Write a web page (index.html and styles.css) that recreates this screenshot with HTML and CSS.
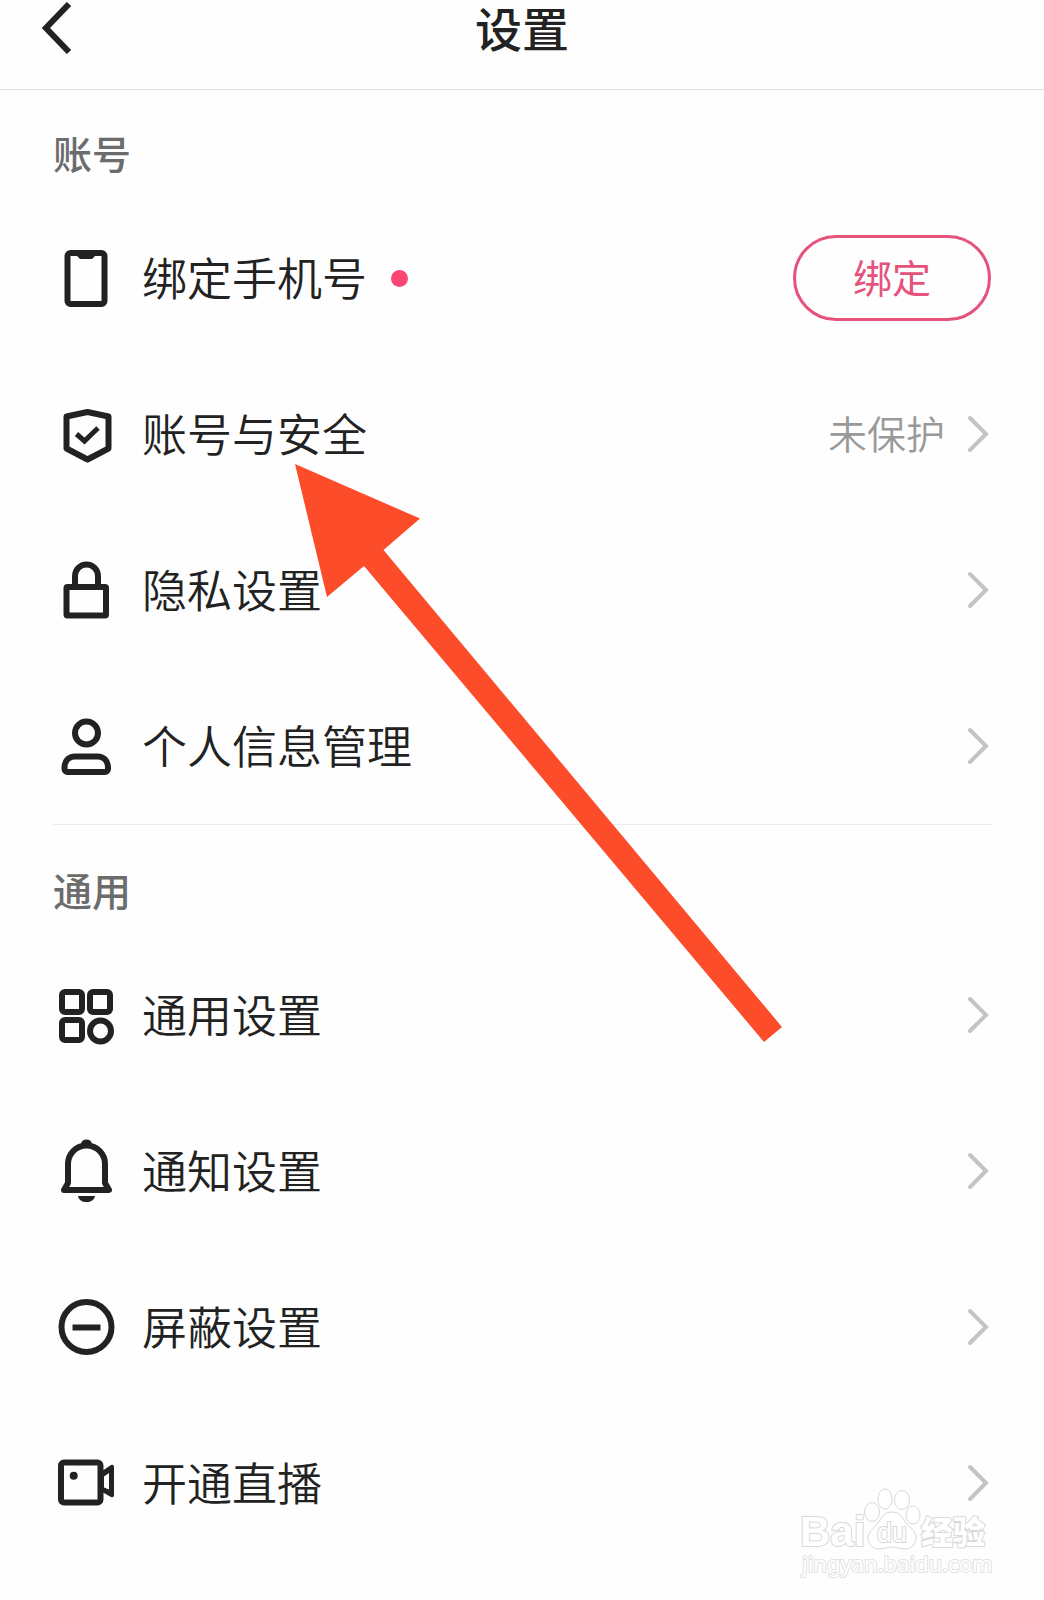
FILE: index.html
```
<!DOCTYPE html>
<html lang="zh-CN">
<head>
  <meta charset="UTF-8">
  <title>设置</title>
  <meta name="viewport" content="width=device-width, initial-scale=1.0">
  <link rel="stylesheet" href="styles.css">
</head>
<body>
  <header class="header">
    <button class="back" type="button" aria-label="返回">
      <svg width="30" height="52" viewBox="0 0 30 52"><path d="M27 2L4 26l23 24"/></svg>
    </button>
    <h1>设置</h1>
  </header>

  <main class="content">
    <section class="section">
      <h2>账号</h2>
      <ul class="list">
        <li class="row">
          <svg class="icon" viewBox="0 0 66 60"><rect x="14.5" y="5" width="37" height="51" rx="3"/><path class="solid" d="M24 5h18v3l-3 3H27l-3-3z"/></svg>
          <span class="label">绑定手机号</span>
          <span class="dot"></span>
          <button class="bind" type="button">绑定</button>
        </li>
        <li>
          <a class="row" href="#">
            <svg class="icon" viewBox="0 0 66 60"><path d="M34.5 8l21 4.500V44.500l-21 11-21-11V12.500z"/><path class="check" d="M23.500 30l8 7 13.500-13"/></svg>
            <span class="label">账号与安全</span>
            <span class="status">未保护</span>
            <svg class="arrow" viewBox="0 0 24 40"><path d="M4 4l16 16L4 36"/></svg>
          </a>
        </li>
        <li>
          <a class="row" href="#">
            <svg class="icon" viewBox="0 0 66 60"><rect x="13.500" y="27" width="39.500" height="28.500" rx="1"/><path d="M22 27V16a11.500 11.500 0 0 1 23 0v11"/></svg>
            <span class="label">隐私设置</span>
            <svg class="arrow" viewBox="0 0 24 40"><path d="M4 4l16 16L4 36"/></svg>
          </a>
        </li>
        <li>
          <a class="row" href="#">
            <svg class="icon" viewBox="0 0 66 60"><circle cx="33.500" cy="17" r="11.500"/><path d="M11.500 52C11.500 44.500 16 40.500 22 40.500h22.500C50.500 40.500 55 44.500 55 52v1a3 3 0 0 1-3 3H14.500a3 3 0 0 1-3-3z"/></svg>
            <span class="label">个人信息管理</span>
            <svg class="arrow" viewBox="0 0 24 40"><path d="M4 4l16 16L4 36"/></svg>
          </a>
        </li>
      </ul>
    </section>

    <section class="section">
      <h2>通用</h2>
      <ul class="list">
        <li>
          <a class="row" href="#">
            <svg class="icon" viewBox="0 0 66 60"><rect x="9" y="7" width="20" height="20" rx="3"/><rect x="37" y="7" width="20" height="20" rx="3"/><rect x="9" y="35" width="20" height="20" rx="3"/><circle cx="47.500" cy="46" r="10.500"/></svg>
            <span class="label">通用设置</span>
            <svg class="arrow" viewBox="0 0 24 40"><path d="M4 4l16 16L4 36"/></svg>
          </a>
        </li>
        <li>
          <a class="row" href="#">
            <svg class="icon" viewBox="0 0 66 60"><path d="M11 49l4-7V23a18.500 18.500 0 0 1 37 0v19l4 7z"/><path class="solid" d="M28 3a5.500 4.500 0 0 1 11 0zM25 55h17c-1 4-4 6-8.500 6s-7.500-2-8.500-6z"/></svg>
            <span class="label">通知设置</span>
            <svg class="arrow" viewBox="0 0 24 40"><path d="M4 4l16 16L4 36"/></svg>
          </a>
        </li>
        <li>
          <a class="row" href="#">
            <svg class="icon" viewBox="0 0 66 60"><circle cx="33.500" cy="30" r="25"/><path d="M19.500 30.500h28"/></svg>
            <span class="label">屏蔽设置</span>
            <svg class="arrow" viewBox="0 0 24 40"><path d="M4 4l16 16L4 36"/></svg>
          </a>
        </li>
        <li>
          <a class="row" href="#">
            <svg class="icon" viewBox="0 0 66 60"><rect x="8" y="9.500" width="39.500" height="40" rx="3"/><circle class="solid" cx="20.700" cy="22.700" r="4"/><path class="solid" fill-rule="evenodd" d="M49 18l9-6q3-1 3 2v28q0 3-3 2l-9-5zM51 23.500v11l5 2V20z"/></svg>
            <span class="label">开通直播</span>
            <svg class="arrow" viewBox="0 0 24 40"><path d="M4 4l16 16L4 36"/></svg>
          </a>
        </li>
      </ul>
    </section>
  </main>

  <!-- 指示箭头 -->
  <svg class="pointer" viewBox="0 0 488 579"><path d="M0 0l125 54.500-36.500 31.500L487 563l-18 15L69 102 32 133z"/></svg>

  <!-- 水印 -->
  <svg class="watermark" viewBox="0 0 190 100">
    <ellipse cx="85" cy="14" rx="7" ry="10"/>
    <ellipse cx="102" cy="15" rx="7.500" ry="9.500"/>
    <ellipse cx="72" cy="27" rx="7.500" ry="9.500"/>
    <ellipse cx="113" cy="30" rx="7" ry="9"/>
    <path d="M92 27c8 0 11 7 15 12 5 5 9 8 9 14 0 7-5 11-11 11-5 0-8-2-13-2s-8 2-13 2c-6 0-11-4-11-11 0-6 5-9 9-14 4-5 7-12 15-12z"/>
    <text class="wm-logo" x="0" y="61">Bai</text>
    <text class="wm-du" x="77" y="57">du</text>
    <text class="wm-cn" x="121" y="59">经验</text>
    <text class="wm-url" x="2" y="87">jingyan.baidu.com</text>
  </svg>
</body>
</html>
```
FILE: styles.css
```
* {
  box-sizing: border-box;
}

body {
  position: relative;
  min-height: 100vh;
  margin: 0;
  background: #fefefe;
  color: #222;
  font-family: "Noto Sans CJK SC", sans-serif;
}

.header {
  display: grid;
  grid-template-columns: 80px 1fr 80px;
  align-items: start;
  height: 90px;
  border-bottom: 1px solid #e2e2e2;
}

.header h1 {
  margin: 0;
  font-size: 47px;
  font-weight: 500;
  line-height: 54px;
  text-align: center;
}

.back {
  display: flex;
  padding: 2px 0 0 42px;
  border: 0;
  background: none;
}

.back path {
  fill: none;
  stroke: #222;
  stroke-width: 6;
}

.content {
  padding: 0 53px 39px;
}

.section {
  padding-top: 34px;
}

.section + .section {
  padding-top: 36px;
  border-top: 1px solid #ebebeb;
}

.section h2 {
  margin: 0 0 20px;
  color: #6c6c6c;
  font-size: 39px;
  font-weight: 500;
  line-height: 56px;
}

.list {
  margin: 0;
  padding: 0;
  list-style: none;
}

.row {
  display: flex;
  align-items: center;
  height: 156px;
  color: #222;
  text-decoration: none;
}

.icon {
  width: 66px;
  height: 60px;
  margin-right: 23px;
  overflow: visible;
  fill: none;
  stroke: #222;
  stroke-width: 6;
}

.icon path,
.icon rect {
  stroke-linejoin: round;
}

.icon .check {
  stroke-width: 5;
  stroke-linejoin: miter;
}

.icon .solid {
  fill: #222;
  stroke: none;
}

.label,
.status {
  padding-bottom: 2px;
  font-weight: 350;
  line-height: 60px;
}

.label {
  font-size: 45px;
}

.dot {
  width: 17px;
  height: 17px;
  margin-left: 24px;
  border-radius: 50%;
  background: #fb4572;
}

.bind {
  width: 198px;
  height: 86px;
  margin-left: auto;
  padding: 0 0 4px;
  border: 3px solid #e5527b;
  border-radius: 43px;
  background: none;
  color: #e5527b;
  font-family: inherit;
  font-size: 39px;
  line-height: 56px;
}

.status {
  margin-left: auto;
  margin-right: 21px;
  padding-bottom: 4px;
  color: #999;
  font-size: 39px;
}

.arrow {
  width: 24px;
  height: 40px;
  margin-right: 1px;
  margin-left: auto;
  fill: none;
  stroke: #c4c4c4;
  stroke-width: 4;
  stroke-linecap: round;
}

.status + .arrow {
  margin-left: 0;
}

.pointer {
  position: absolute;
  top: 464px;
  left: 295px;
  width: 488px;
  height: 579px;
  fill: #fc4c2a;
  pointer-events: none;
}

.watermark {
  position: absolute;
  top: 1485px;
  right: 54px;
  width: 190px;
  height: 100px;
  overflow: visible;
  fill: #fff;
  stroke: #d8d8d8;
  stroke-width: 1;
  pointer-events: none;
}

.watermark text {
  paint-order: stroke;
  stroke-width: 2;
}

.wm-logo {
  font: bold 42px "Liberation Sans", sans-serif;
}

.wm-du {
  font: 27px "Liberation Sans", sans-serif;
}

.wm-cn {
  font: 900 32px "Noto Sans CJK SC", sans-serif;
}

.wm-url {
  font: 22px "Noto Sans", sans-serif;
  stroke: #e2e2e2;
}
```
